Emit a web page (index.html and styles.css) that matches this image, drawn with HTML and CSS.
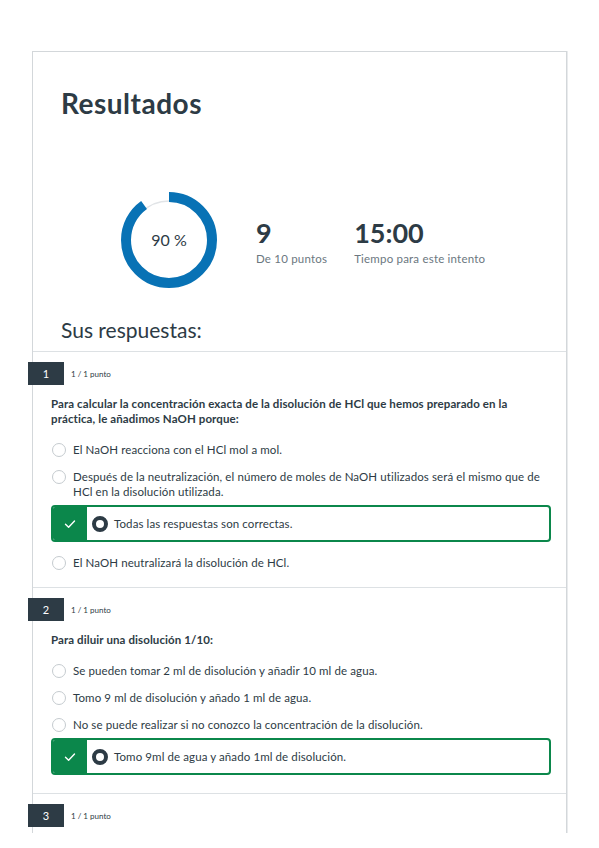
FILE: index.html
```html
<!DOCTYPE html>
<html lang="es">
<head>
<meta charset="utf-8">
<title>Resultados</title>
<link rel="stylesheet" href="styles.css">
</head>
<body>
<div class="viewport">
  <div class="card">
    <header class="head">
      <h1 class="title">Resultados</h1>
      <div class="stats">
        <div class="donut">
          <svg class="donut-svg" width="96" height="96" viewBox="0 0 96 96">
            <circle cx="48" cy="48" r="39" fill="none" stroke="#e1e4e7" stroke-width="1.5"/>
            <circle cx="48" cy="48" r="43" fill="none" stroke="#0872b5" stroke-width="10" stroke-dasharray="243.16 270.18" transform="rotate(-90 48 48)"/>
          </svg>
          <span class="donut-label">90 %</span>
        </div>
        <div class="stat stat-first">
          <div class="stat-num">9</div>
          <div class="stat-label">De 10 puntos</div>
        </div>
        <div class="stat">
          <div class="stat-num">15:00</div>
          <div class="stat-label">Tiempo para este intento</div>
        </div>
      </div>
      <h2 class="subtitle">Sus respuestas:</h2>
    </header>

    <section class="question">
      <div class="q-head">
        <span class="badge">1</span>
        <span class="points">1 / 1 punto</span>
      </div>
      <p class="q-text">Para calcular la concentración exacta de la disolución de HCl que hemos preparado en la práctica, le añadimos NaOH porque:</p>
      <div class="option"><span class="radio"></span><span class="opt-text">El NaOH reacciona con el HCl mol a mol.</span></div>
      <div class="option"><span class="radio"></span><span class="opt-text">Después de la neutralización, el número de moles de NaOH utilizados será el mismo que de HCl en la disolución utilizada.</span></div>
      <div class="correct">
        <span class="correct-mark"><svg width="12" height="10" viewBox="0 0 12 10"><polyline points="1.5,5.2 4.6,8.2 10.5,2" fill="none" stroke="#ffffff" stroke-width="1.4" stroke-linecap="round" stroke-linejoin="round"/></svg></span>
        <span class="radio-on"></span>
        <span class="opt-text">Todas las respuestas son correctas.</span>
      </div>
      <div class="option"><span class="radio"></span><span class="opt-text">El NaOH neutralizará la disolución de HCl.</span></div>
    </section>

    <section class="question">
      <div class="q-head">
        <span class="badge">2</span>
        <span class="points">1 / 1 punto</span>
      </div>
      <p class="q-text">Para diluir una disolución 1/10:</p>
      <div class="option"><span class="radio"></span><span class="opt-text">Se pueden tomar 2 ml de disolución y añadir 10 ml de agua.</span></div>
      <div class="option"><span class="radio"></span><span class="opt-text">Tomo 9 ml de disolución y añado 1 ml de agua.</span></div>
      <div class="option"><span class="radio"></span><span class="opt-text">No se puede realizar si no conozco la concentración de la disolución.</span></div>
      <div class="correct">
        <span class="correct-mark"><svg width="12" height="10" viewBox="0 0 12 10"><polyline points="1.5,5.2 4.6,8.2 10.5,2" fill="none" stroke="#ffffff" stroke-width="1.4" stroke-linecap="round" stroke-linejoin="round"/></svg></span>
        <span class="radio-on"></span>
        <span class="opt-text">Tomo 9ml de agua y añado 1ml de disolución.</span>
      </div>
    </section>

    <section class="question question-last">
      <div class="q-head">
        <span class="badge">3</span>
        <span class="points">1 / 1 punto</span>
      </div>
    </section>
  </div>
</div>
</body>
</html>
```

FILE: styles.css
```css
* {
  box-sizing: border-box;
}

html, body {
  margin: 0;
  padding: 0;
  background: #ffffff;
}

body {
  font-family: Lato, "Liberation Sans", Arial, sans-serif;
  color: #2d3b45;
}

.viewport {
  height: 833px;
  overflow: hidden;
}

.card {
  margin: 51px 0 0 32px;
  width: 535px;
  min-height: 900px;
  border: 1px solid #d3d7da;
  box-shadow: 1px 0 0 #e9ebed;
  background: #ffffff;
}

.head {
  padding: 34px 20px 7px 28px;
}

.title {
  margin: 0;
  font-size: 28px;
  line-height: 34px;
  font-weight: 700;
  letter-spacing: 0.5px;
  color: #2d3b45;
}

.stats {
  display: flex;
  align-items: center;
  margin-top: 72px;
  margin-left: 60px;
}

.donut {
  display: grid;
  width: 96px;
  height: 96px;
  flex: none;
}

.donut-svg,
.donut-label {
  grid-area: 1 / 1;
}

.donut-svg {
  display: block;
}

.donut-label {
  align-self: center;
  justify-self: center;
  font-size: 16px;
  line-height: 18px;
  color: #2d3b45;
}

.stat {
  margin-left: 27px;
  padding-top: 3px;
}

.stat-first {
  margin-left: 39px;
}

.stat-num {
  font-size: 27px;
  line-height: 30px;
  font-weight: 700;
  color: #2d3b45;
}

.stat-label {
  margin-top: 4px;
  font-size: 11.5px;
  line-height: 14px;
  letter-spacing: 0.2px;
  color: #6b7780;
}

.subtitle {
  margin: 28px 0 0;
  font-size: 21px;
  line-height: 28px;
  font-weight: 400;
  color: #2d3b45;
}

.question {
  border-top: 1px solid #dde1e4;
  padding: 10px 15px 11px 18px;
}

.q-head {
  display: flex;
  align-items: center;
  margin-left: -23px;
}

.badge {
  display: flex;
  align-items: center;
  justify-content: center;
  width: 36px;
  height: 23px;
  background: #2d3b45;
  color: #ffffff;
  font-size: 11px;
}

.points {
  margin-left: 7px;
  font-size: 8px;
  color: #2d3b45;
}

.q-text {
  margin: 11px 0 10px;
  font-size: 11.5px;
  line-height: 15px;
  font-weight: 700;
  letter-spacing: 0.1px;
}

.option {
  display: flex;
  align-items: flex-start;
  padding: 6px 0;
  font-size: 11.5px;
  line-height: 15px;
  letter-spacing: 0.1px;
}

.radio {
  flex: none;
  width: 14px;
  height: 14px;
  margin: 0.5px 7px 0 1px;
  border: 1px solid #c5cbcf;
  border-radius: 50%;
  background: #ffffff;
}

.opt-text {
  flex: 1;
}

.correct {
  display: flex;
  align-items: center;
  height: 37px;
  margin: 0 0 7px;
  border: 2px solid #0b874b;
  border-radius: 4px;
  font-size: 11.5px;
  line-height: 15px;
  letter-spacing: 0.1px;
  overflow: hidden;
}

.correct-mark {
  flex: none;
  display: flex;
  align-items: center;
  justify-content: center;
  width: 34px;
  align-self: stretch;
  background: #0b874b;
}

.correct-mark svg {
  display: block;
}

.radio-on {
  flex: none;
  width: 16px;
  height: 16px;
  margin: 0 6px 0 5px;
  border: 4.5px solid #2d3b45;
  border-radius: 50%;
  background: #ffffff;
}

.question-last {
  padding-bottom: 200px;
}
```
